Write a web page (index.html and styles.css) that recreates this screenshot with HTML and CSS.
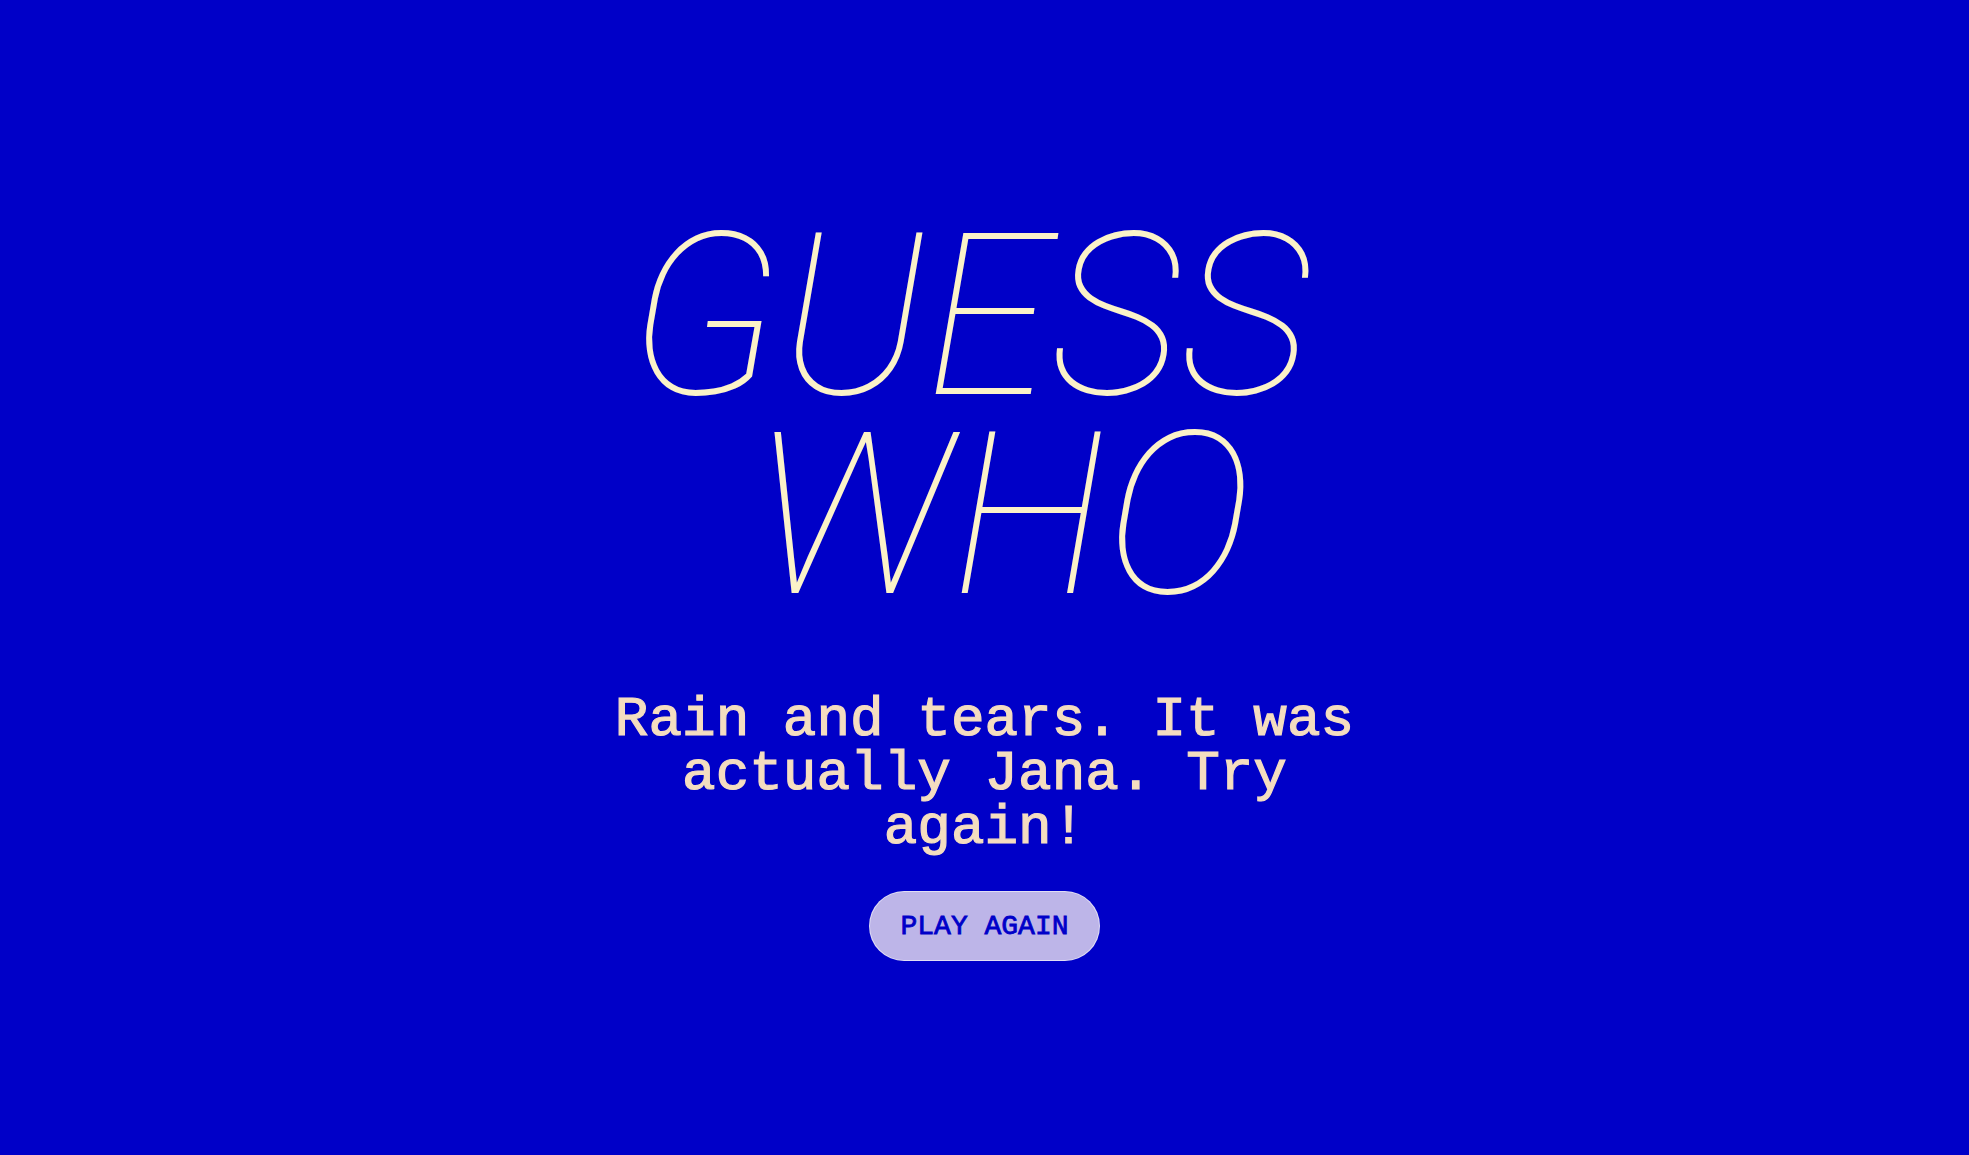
FILE: index.html
```html
<!DOCTYPE html>
<html lang="en">
<head>
<meta charset="utf-8">
<title>Guess Who</title>
<link rel="stylesheet" href="styles.css">
</head>
<body>
<main class="screen">
  <h1 class="title"><span class="title-line title-line--first">GUESS</span><span class="title-line title-line--second">WHO</span></h1>
  <p class="message">Rain and tears. It was actually Jana. Try again!</p>
  <button class="play-btn" type="button">PLAY AGAIN</button>
</main>
</body>
</html>
```

FILE: styles.css
```css
html, body {
  margin: 0;
  padding: 0;
  background: #0000c8;
}

.screen {
  min-height: 100vh;
  box-sizing: border-box;
  padding-top: 217px;
  display: flex;
  flex-direction: column;
  align-items: center;
}

.title {
  margin: 0;
  display: flex;
  flex-direction: column;
  align-items: center;
  font-family: Roboto, "Liberation Sans", sans-serif;
  font-weight: 100;
  font-style: italic;
  font-size: 226px;
  line-height: 199px;
  letter-spacing: 0;
  color: #fbf2c8;
  text-align: center;
}

.title-line {
  display: block;
}

.title-line--first {
  padding-right: 30px;
}

.title-line--second {
  padding-left: 36px;
}

.message {
  margin: 78px 0 0;
  max-width: 780px;
  font-family: "Liberation Mono", "Courier New", monospace;
  font-weight: 400;
  -webkit-text-stroke: 1.2px #f4ddc0;
  font-size: 56px;
  line-height: 54px;
  color: #f4ddc0;
  text-align: center;
}

.play-btn {
  margin-top: 36px;
  height: 70px;
  padding: 0 30px;
  border: 1px solid rgba(255, 255, 255, 0.55);
  border-radius: 35px;
  background: #bdb5e8;
  color: #0000c8;
  font-family: "Liberation Mono", "Courier New", monospace;
  font-weight: 400;
  -webkit-text-stroke: 0.8px #0000c8;
  font-size: 28px;
  cursor: pointer;
}
```
